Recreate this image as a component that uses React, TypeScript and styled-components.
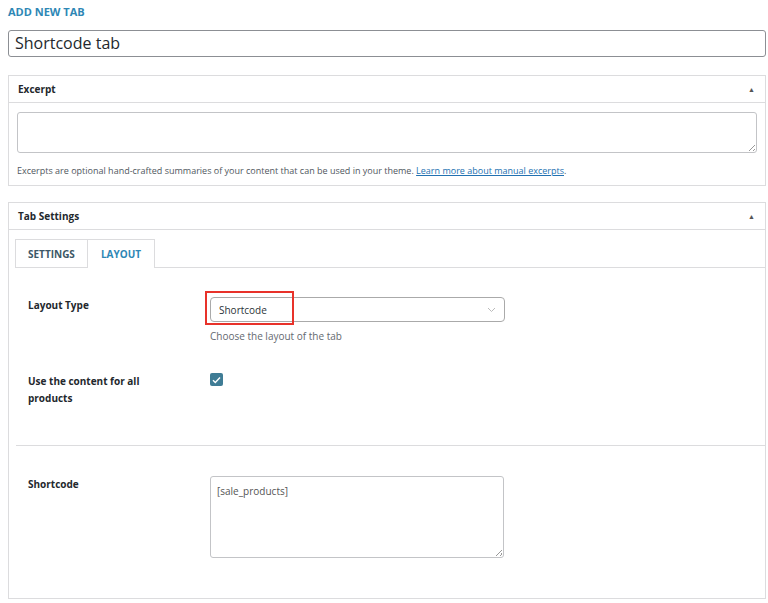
import { FC } from 'react'
import styled, { createGlobalStyle } from 'styled-components'

const Global = createGlobalStyle`
  body { margin: 0; background: #fff; font-family: 'Open Sans', 'Liberation Sans', Arial, sans-serif; color: #23282d; }
`

const Page = styled.div`
  padding: 4px 2px 0 8px;
`

const Heading = styled.div`
  color: #2e87b5;
  font-size: 11px;
  font-weight: 700;
  height: 26px;
  line-height: 16px;
`

const TitleInput = styled.div`
  height: 27px;
  border: 1px solid #8c8f94;
  border-radius: 3px;
  font-size: 16px;
  line-height: 25px;
  padding: 0 6px;
  box-sizing: border-box;
  margin-bottom: 18px;
`

const Panel = styled.div<{ $h: number }>`
  border: 1px solid #dcdcde;
  height: ${p => p.$h}px;
  box-sizing: border-box;
  margin-bottom: 16px;
`

const PanelHead = styled.div`
  height: 26px;
  border-bottom: 1px solid #dcdcde;
  display: flex;
  justify-content: space-between;
  align-items: center;
  padding: 0 10px 0 9px;
  font-size: 10px;
  font-weight: 700;
`

const Caret = styled.span`
  font-size: 7px;
  color: #555;
`

const ExcerptBody = styled.div`
  padding: 9px 8px 0;
`

const TextArea = styled.div<{ $h: number; $w?: number }>`
  height: ${p => p.$h}px;
  width: ${p => (p.$w ? `${p.$w}px` : 'auto')};
  border: 1px solid #c3c4c7;
  border-radius: 3px;
  box-sizing: border-box;
  font-size: 10px;
  color: #555;
  padding: 7px 6px;
  position: relative;
`

const Grip = styled.span`
  position: absolute;
  right: 1px;
  bottom: 1px;
  width: 6px;
  height: 6px;
  background: linear-gradient(135deg, transparent 45%, #999 45%, #999 55%, transparent 55%, transparent 75%, #999 75%, #999 85%, transparent 85%);
`

const Help = styled.p`
  font-size: 9px;
  color: #50575e;
  margin: 11px 0 0;
  a { color: #2271b1; }
`

const Tabs = styled.div`
  display: flex;
  margin: 9px 0 0 6px;
  border-bottom: 1px solid #dcdcde;
`

const Tab = styled.div<{ $active?: boolean }>`
  padding: 0 ${p => (p.$active ? 13 : 12)}px;
  display: flex;
  align-items: center;
  font-size: 10px;
  font-weight: 700;
  color: ${p => (p.$active ? '#2e87b5' : '#3c5766')};
  border: 1px solid #dcdcde;
  border-bottom: none;
  border-left: ${p => (p.$active ? 'none' : '1px solid #dcdcde')};
  background: #fff;
  margin-bottom: ${p => (p.$active ? '-1px' : '0')};
  height: ${p => (p.$active ? 28 : 27)}px;
`

const Row = styled.div<{ $h: number; $top: number }>`
  display: flex;
  height: ${p => p.$h}px;
  padding: ${p => p.$top}px 0 0 19px;
  box-sizing: border-box;
`

const Label = styled.div`
  width: 182px;
  font-size: 10px;
  font-weight: 700;
  line-height: 17px;
  span { display: block; max-width: 125px; }
`

const Field = styled.div``

const SelectWrap = styled.div`
  position: relative;
`

const Select = styled.div`
  width: 295px;
  height: 25px;
  border: 1px solid #aaa;
  border-radius: 4px;
  box-sizing: border-box;
  display: flex;
  align-items: center;
  justify-content: space-between;
  padding: 0 8px;
  font-size: 10px;
  color: #2c3338;
`

const Highlight = styled.div`
  position: absolute;
  left: -5px;
  top: -6px;
  width: 89px;
  height: 34px;
  border: 2px solid #e8322a;
  box-sizing: border-box;
`

const FieldHelp = styled.div`
  font-size: 10px;
  color: #646970;
  margin-top: 7px;
`

const Check = styled.div`
  width: 13px;
  height: 13px;
  background: #3f7c95;
  border-radius: 2px;
  display: flex;
  align-items: center;
  justify-content: center;
`

const Divider = styled.div`
  border-top: 1px solid #dcdcde;
  margin-left: 7px;
`

const App: FC = () => (
  <Page>
    <Global />
    <Heading>ADD NEW TAB</Heading>
    <TitleInput>Shortcode tab</TitleInput>
    <Panel $h={111}>
      <PanelHead>Excerpt<Caret>▲</Caret></PanelHead>
      <ExcerptBody>
        <TextArea $h={41}><Grip /></TextArea>
        <Help>
          Excerpts are optional hand-crafted summaries of your content that can be used in your theme.{' '}
          <a href="#">Learn more about manual excerpts</a>.
        </Help>
      </ExcerptBody>
    </Panel>
    <Panel $h={397}>
      <PanelHead>Tab Settings<Caret>▲</Caret></PanelHead>
      <Tabs>
        <Tab>SETTINGS</Tab>
        <Tab $active>LAYOUT</Tab>
      </Tabs>
      <Row $h={105} $top={29}>
        <Label>Layout Type</Label>
        <Field>
          <SelectWrap>
            <Select>
              Shortcode
              <svg width="9" height="6" viewBox="0 0 9 6"><path d="M1 1l3.5 3.5L8 1" stroke="#bbb" fill="none" /></svg>
            </Select>
            <Highlight />
          </SelectWrap>
          <FieldHelp>Choose the layout of the tab</FieldHelp>
        </Field>
      </Row>
      <Row $h={72} $top={0}>
        <Label><span>Use the content for all products</span></Label>
        <Field>
          <Check>
            <svg width="9" height="8" viewBox="0 0 9 8"><path d="M1 4.2l2.3 2.3L8 1.5" stroke="#fff" strokeWidth="1.4" fill="none" /></svg>
          </Check>
        </Field>
      </Row>
      <Divider />
      <Row $h={120} $top={30}>
        <Label>Shortcode</Label>
        <Field>
          <TextArea $h={82} $w={294}>[sale_products]<Grip /></TextArea>
        </Field>
      </Row>
    </Panel>
  </Page>
)

export default App
